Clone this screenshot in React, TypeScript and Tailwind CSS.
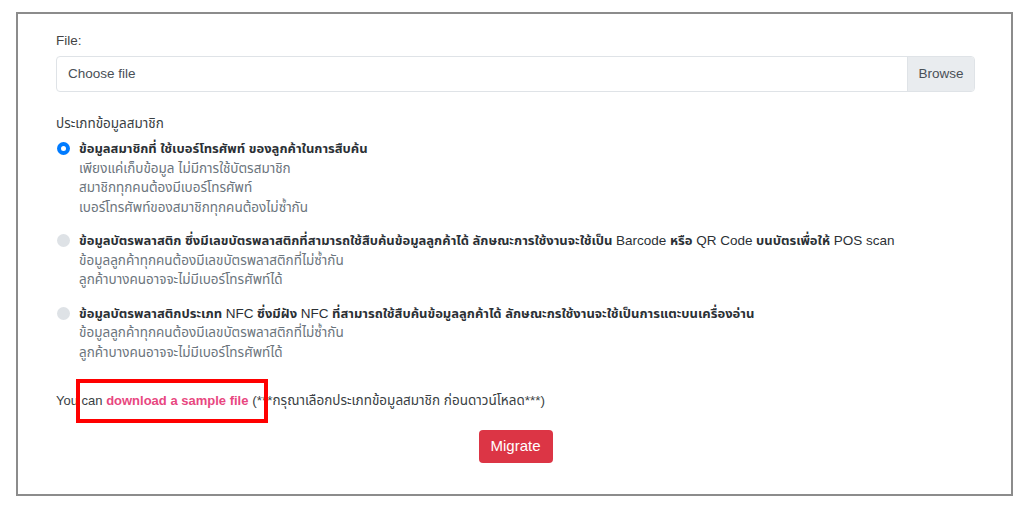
import React from "react";

const font = { fontFamily: '"Liberation Sans", "Noto Sans Thai", "Noto Sans", Arial, sans-serif' };

function Radio({ checked }: { checked?: boolean }) {
  return checked ? (
    <span className="mt-[3px] flex h-[13px] w-[13px] shrink-0 items-center justify-center rounded-full bg-[#007bff]">
      <span className="h-[5px] w-[5px] rounded-full bg-white" />
    </span>
  ) : (
    <span className="mt-[3px] h-[13px] w-[13px] shrink-0 rounded-full bg-[#dee2e6]" />
  );
}

function Option({ checked, title, lines }: { checked?: boolean; title: React.ReactNode; lines: string[] }) {
  return (
    <div className="flex gap-[9px] pl-[1px]">
      <Radio checked={checked} />
      <div className="flex flex-col">
        <div className="text-[13px] leading-[19.5px] font-bold text-[#2b3035]">{title}</div>
        {lines.map((l, i) => (
          <div key={i} className="text-[13.5px] leading-[19.5px] text-[#6c757d]">{l}</div>
        ))}
      </div>
    </div>
  );
}

const L = ({ children }: { children: React.ReactNode }) => (
  <span className="text-[13.5px] font-normal">{children}</span>
);

export default function App() {
  return (
    <div className="h-[508px] w-[1024px] bg-white pl-[16px] pt-[12px]" style={font}>
      <div className="flex h-[484px] w-[997px] flex-col border-2 border-[#8c8c8c] pl-[38px] pr-[36px] pt-[18px]">
        <div className="text-[13.5px] leading-[18px] text-[#444]">File:</div>
        <div className="mt-[6px] flex h-[36px] overflow-hidden rounded-[4px] border border-[#dfe3e7]">
          <div className="flex flex-1 items-center pl-[11px] text-[13.5px] text-[#495057]">Choose file</div>
          <div className="flex w-[67px] items-center justify-center border-l border-[#dfe3e7] bg-[#e9ecef] text-[13.5px] text-[#495057]">
            Browse
          </div>
        </div>
        <div className="mt-[22px] text-[13.5px] leading-[19px] text-[#3a3f44]">ประเภทข้อมูลสมาชิก</div>
        <div className="mt-[6px] flex flex-col gap-[14px]">
          <Option
            checked
            title="ข้อมูลสมาชิกที่ ใช้เบอร์โทรศัพท์ ของลูกค้าในการสืบค้น"
            lines={["เพียงแค่เก็บข้อมูล ไม่มีการใช้บัตรสมาชิก", "สมาชิกทุกคนต้องมีเบอร์โทรศัพท์", "เบอร์โทรศัพท์ของสมาชิกทุกคนต้องไม่ซ้ำกัน"]}
          />
          <Option
            title={
              <>
                ข้อมูลบัตรพลาสติก ซึ่งมีเลขบัตรพลาสติกที่สามารถใช้สืบค้นข้อมูลลูกค้าได้ ลักษณะการใช้งานจะใช้เป็น <L>Barcode</L> หรือ <L>QR Code</L> บนบัตรเพื่อให้ <L>POS scan</L>
              </>
            }
            lines={["ข้อมูลลูกค้าทุกคนต้องมีเลขบัตรพลาสติกที่ไม่ซ้ำกัน", "ลูกค้าบางคนอาจจะไม่มีเบอร์โทรศัพท์ได้"]}
          />
          <Option
            title={
              <>
                ข้อมูลบัตรพลาสติกประเภท <L>NFC</L> ซึ่งมีฝัง <L>NFC</L> ที่สามารถใช้สืบค้นข้อมูลลูกค้าได้ ลักษณะกรใช้งานจะใช้เป็นการแตะบนเครื่องอ่าน
              </>
            }
            lines={["ข้อมูลลูกค้าทุกคนต้องมีเลขบัตรพลาสติกที่ไม่ซ้ำกัน", "ลูกค้าบางคนอาจจะไม่มีเบอร์โทรศัพท์ได้"]}
          />
        </div>
        <div className="relative mt-[29px] text-[13.5px] leading-[19px] text-[#3a3f44]">
          <span className="text-[13px]">You can </span>
          <span className="text-[13px] font-bold text-[#e8477f]">download a sample file</span> (***กรุณาเลือกประเภทข้อมูลสมาชิก ก่อนดาวน์โหลด***)
          <div className="absolute left-[20px] top-[-12px] h-[44px] w-[192px] border-4 border-[#ff0000]" />
        </div>
        <div className="mt-[20px] flex justify-center">
          <div className="flex h-[33px] w-[74px] items-center justify-center rounded-[4px] bg-[#dc3545] text-[15px] text-white">
            Migrate
          </div>
        </div>
      </div>
    </div>
  );
}
